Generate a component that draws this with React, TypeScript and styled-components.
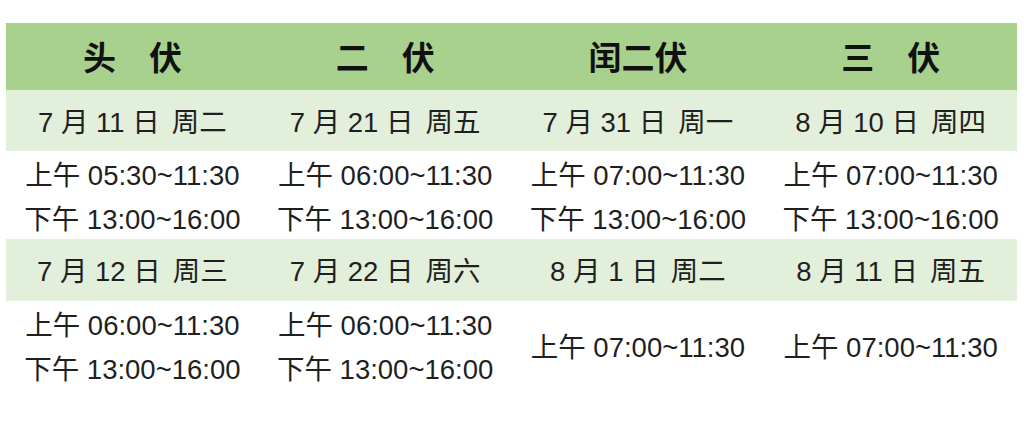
import { FC } from "react";
import styled, { createGlobalStyle } from "styled-components";

const GlobalStyle = createGlobalStyle`
  html, body {
    margin: 0;
    padding: 0;
    background: #ffffff;
  }
  body {
    font-family: "Liberation Sans", "Noto Sans CJK SC", sans-serif;
    color: #1f1f1f;
  }
`;

const Page = styled.div`
  width: 1024px;
  height: 439px;
  padding: 23px 7px 0 6px;
  box-sizing: border-box;
`;

const Row = styled.div<{ $bg?: string; $height: number }>`
  display: grid;
  grid-template-columns: repeat(4, 1fr);
  height: ${(p) => p.$height}px;
  background: ${(p) => p.$bg || "transparent"};
`;

const HeadCell = styled.div`
  display: flex;
  align-items: center;
  justify-content: center;
  font-family: "Noto Sans CJK SC", sans-serif;
  font-weight: 700;
  font-size: 33px;
  color: #111;
  padding-bottom: 2px;
`;

const DateCell = styled.div`
  display: flex;
  align-items: center;
  justify-content: center;
  font-size: 27.5px;
  white-space: pre;
  padding-bottom: 2px;
`;

const TimeCell = styled.div`
  display: flex;
  flex-direction: column;
  align-items: center;
  justify-content: center;
  font-size: 27.5px;
  white-space: pre;
  padding-bottom: 8px;
`;

const Line = styled.div`
  height: 44px;
  line-height: 44px;
`;

const Cjk = styled.span`
  font-family: "Noto Sans CJK SC", sans-serif;
  font-weight: 400;
`;

const Gap = styled.span`
  display: inline-block;
  width: 12px;
`;

interface iDay {
  m: number;
  d: number;
  w: string;
}

const DateText: FC<iDay> = ({ m, d, w }) => (
  <DateCell>
    <Line>
      {m} <Cjk>月</Cjk> {d} <Cjk>日</Cjk>
      <Gap />
      <Cjk>周{w}</Cjk>
    </Line>
  </DateCell>
);

const TimeLine: FC<{ label: string; value: string }> = ({ label, value }) => (
  <Line>
    <Cjk>{label}</Cjk> {value}
  </Line>
);

const heads = ["头　伏", "二　伏", "闰二伏", "三　伏"];

const blocks: { days: iDay[]; times: string[][] }[] = [
  {
    days: [
      { m: 7, d: 11, w: "二" },
      { m: 7, d: 21, w: "五" },
      { m: 7, d: 31, w: "一" },
      { m: 8, d: 10, w: "四" },
    ],
    times: [
      ["05:30~11:30", "13:00~16:00"],
      ["06:00~11:30", "13:00~16:00"],
      ["07:00~11:30", "13:00~16:00"],
      ["07:00~11:30", "13:00~16:00"],
    ],
  },
  {
    days: [
      { m: 7, d: 12, w: "三" },
      { m: 7, d: 22, w: "六" },
      { m: 8, d: 1, w: "二" },
      { m: 8, d: 11, w: "五" },
    ],
    times: [
      ["06:00~11:30", "13:00~16:00"],
      ["06:00~11:30", "13:00~16:00"],
      ["07:00~11:30"],
      ["07:00~11:30"],
    ],
  },
];

const App: FC = () => {
  return (
    <>
      <GlobalStyle />
      <Page>
        <Row $bg="#a9d18e" $height={67}>
          {heads.map((h) => (
            <HeadCell key={h}>{h}</HeadCell>
          ))}
        </Row>
        {blocks.map((b, i) => (
          <div key={i}>
            <Row $bg="#e2efda" $height={i === 0 ? 61 : 62}>
              {b.days.map((d) => (
                <DateText key={`${d.m}-${d.d}`} {...d} />
              ))}
            </Row>
            <Row $height={88}>
              {b.times.map((t, j) => (
                <TimeCell key={j}>
                  <TimeLine label="上午" value={t[0]} />
                  {t[1] && <TimeLine label="下午" value={t[1]} />}
                </TimeCell>
              ))}
            </Row>
          </div>
        ))}
      </Page>
    </>
  );
};

export default App;
